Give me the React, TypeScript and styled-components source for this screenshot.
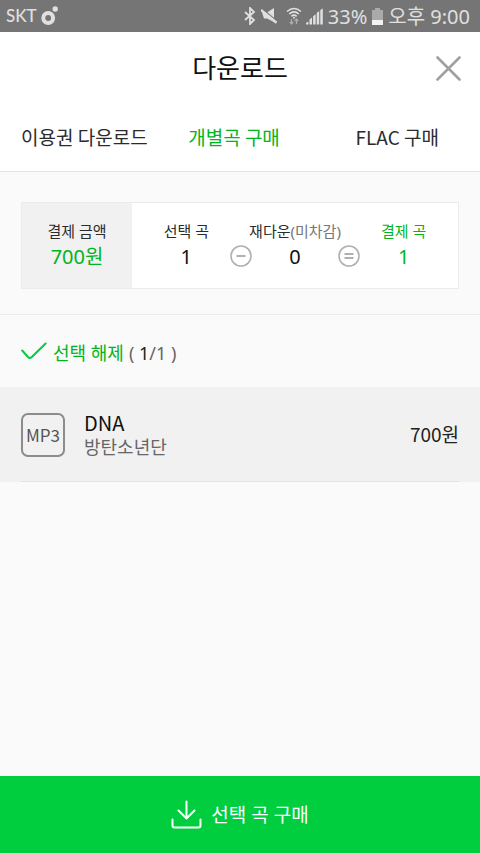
import React, { useState } from 'react';
import styled, { createGlobalStyle } from 'styled-components';

const mixedFont = "'Noto Sans', 'Noto Sans CJK KR', sans-serif";
const koreanFont = "'Noto Sans CJK KR', 'Noto Sans', sans-serif";

const GlobalStyle = createGlobalStyle`
  * { box-sizing: border-box; }
  body {
    margin: 0;
    background: #fafafa;
    color: #222;
    font-family: ${mixedFont};
  }
  button { font: inherit; color: inherit; background: none; border: 0; padding: 0; cursor: pointer; }
  h1, p, dl, dt, dd, ul { margin: 0; padding: 0; }
  ul { list-style: none; }
  svg { display: block; flex: none; }
`;

const Page = styled.div`
  min-height: 100vh;
  display: flex;
  flex-direction: column;
`;

const StatusBar = styled.div`
  display: flex;
  align-items: center;
  justify-content: space-between;
  height: 32px;
  padding: 0 10px 0 6px;
  background: #757575;
  color: #e0e0e0;
`;

const StatusGroup = styled.div<{ $gap: number }>`
  display: flex;
  align-items: center;
  gap: ${({ $gap }) => $gap}px;
  line-height: 32px;
`;

const Carrier = styled.span`
  font-family: Lato, sans-serif;
  font-size: 17px;
  font-weight: 500;
`;

const StatusText = styled.span`
  padding-top: 2px;
  font-size: 20px;
`;

const Header = styled.header`
  background: #fff;
  border-bottom: 1px solid #e4e4e4;
`;

const TitleRow = styled.div`
  display: grid;
  grid-template-columns: 1fr auto 1fr;
  align-items: center;
  height: 72px;
  padding: 0 19px;
`;

const Title = styled.h1`
  grid-column: 2;
  font-size: 26px;
  font-weight: 400;
  line-height: 40px;
  color: #111;
`;

const CloseButton = styled.button`
  justify-self: end;
`;

const Tabs = styled.div`
  display: grid;
  grid-template-columns: 40% 1fr auto;
  justify-items: start;
  align-items: start;
  height: 67px;
  padding: 0 41px 0 21px;
`;

const Tab = styled.button<{ $active: boolean }>`
  font-family: ${koreanFont};
  font-size: 19px;
  line-height: 65px;
  color: ${({ $active }) => ($active ? '#00b520' : '#2b2b2b')};
`;

const Summary = styled.section`
  padding: 30px 21px 25px;
  border-bottom: 1px solid #ececec;
`;

const SummaryCard = styled.dl`
  display: flex;
  height: 87px;
  border: 1px solid #ebebeb;
  background: #fff;
`;

const Amount = styled.div`
  width: 110px;
  padding-top: 15px;
  background: #f1f1f1;
  text-align: center;
`;

const Formula = styled.div`
  display: flex;
  flex: 1;
  padding-top: 15px;
`;

const Figure = styled.div`
  flex: 1 1 0;
  text-align: center;
  white-space: nowrap;
`;

const Label = styled.dt<{ $green?: boolean }>`
  font-size: 15px;
  line-height: 26px;
  color: ${({ $green }) => ($green ? '#00b520' : '#2b2b2b')};
`;

const Note = styled.span`
  color: #777;
`;

const Value = styled.dd<{ $green?: boolean }>`
  font-size: 20px;
  line-height: 26px;
  color: ${({ $green }) => ($green ? '#00b520' : '#111')};
`;

const Operator = styled.div`
  width: 22px;
  margin: 27px -11px 0;
`;

const SelectButton = styled.button`
  display: flex;
  align-items: center;
  height: 72px;
  padding: 0 21px;
  font-size: 18px;
  line-height: 28px;
  color: #666;
`;

const SelectLabel = styled.span`
  margin: 0 5px 0 6px;
  padding-top: 4px;
  color: #00b520;
`;

const SelectCount = styled.span`
  padding-top: 4px;
`;

const Checked = styled.span`
  color: #222;
`;

const Song = styled.li`
  padding: 0 21px;
  background: #f1f1f1;
`;

const SongRow = styled.div`
  display: flex;
  align-items: center;
  height: 95px;
  padding-top: 2px;
  border-bottom: 1px solid #e4e4e4;
`;

const Format = styled.span`
  width: 44px;
  height: 44px;
  border: 2px solid #8c8c8c;
  border-radius: 7px;
  font-family: ${koreanFont};
  font-size: 17px;
  line-height: 40px;
  text-align: center;
  color: #555;
`;

const SongInfo = styled.div`
  flex: 1;
  margin-left: 19px;
  line-height: 24px;
`;

const SongTitle = styled.p`
  font-family: ${koreanFont};
  font-size: 20px;
  color: #111;
`;

const Artist = styled.p`
  font-size: 18px;
  color: #666;
`;

const Price = styled.span`
  padding-bottom: 3px;
  font-family: ${koreanFont};
  font-size: 19px;
  color: #222;
`;

const BuyButton = styled.button`
  display: flex;
  align-items: center;
  justify-content: center;
  gap: 9px;
  height: 77px;
  margin-top: auto;
  background: #00ce3e;
  color: #fff;
  font-size: 19px;
`;

const BuyLabel = styled.span`
  padding-bottom: 2px;
`;

const CarrierIcon = () => (
  <svg width="18" height="20" viewBox="0 0 18 20">
    <circle cx="7.2" cy="12" r="4.9" fill="none" stroke="#e0e0e0" strokeWidth="4" />
    <circle cx="14.2" cy="3" r="2.7" fill="#e0e0e0" />
  </svg>
);

const BluetoothIcon = () => (
  <svg width="12" height="18" viewBox="0 0 12 18" fill="none" stroke="#e0e0e0" strokeWidth="1.8">
    <path d="M1 5l9 8-4 4V1l4 4-9 8" />
  </svg>
);

const MuteIcon = () => (
  <svg width="17" height="18" viewBox="0 0 17 18" fill="#e0e0e0">
    <path d="M1 5.5h5L13 1v14L6 11.5H3z" />
    <path d="M1.2 1.8l15 12.4" stroke="#757575" strokeWidth="1.2" />
    <path d="M0 3l15.5 12.8" stroke="#e0e0e0" strokeWidth="2.4" />
  </svg>
);

const WifiIcon = () => (
  <svg width="16" height="18" viewBox="0 0 16 18" fill="none" stroke="#e0e0e0" strokeWidth="1.6">
    <path d="M1 4.5Q8-1.5 15 4.5M3.2 7Q8 2.8 12.8 7M5.4 9.3Q8 7 10.6 9.3" />
    <circle cx="8" cy="10.7" r="1" fill="#e0e0e0" stroke="none" />
    <path d="M5.5 12v4.5M3.8 15l1.7 2 1.7-2M10.5 17v-4.5M8.8 14l1.7-2 1.7 2" stroke="#adadad" strokeWidth="1.2" />
  </svg>
);

const SignalIcon = () => (
  <svg width="17" height="17" viewBox="0 0 17 17" fill="#e0e0e0">
    <path d="M0 16.5V15l2.4-1.5v3zM3.5 16.5v-5l2.5-2v7zM7.1 16.5V8.2l2.5-2v10.3zM10.7 16.5V5l2.5-2v13.5zM14.3 16.5V2l2.5-1.5v16z" />
  </svg>
);

const BatteryIcon = () => (
  <svg width="11" height="17" viewBox="0 0 11 17">
    <path d="M3 0h5v2h3v15H0V2h3z" fill="#aaa" />
    <path d="M0 12h11v5H0z" fill="#f2f2f2" />
  </svg>
);

const CloseIcon = () => (
  <svg width="25" height="25" viewBox="0 0 25 25" fill="none" stroke="#a0a0a0" strokeWidth="2.6" strokeLinecap="round">
    <path d="M1.5 1.5l22 22M23.5 1.5l-22 22" />
  </svg>
);

const OperatorIcon = ({ d }: { d: string }) => (
  <svg width="22" height="22" viewBox="0 0 22 22" fill="none" stroke="#b0b0b0" strokeWidth="1.6">
    <circle cx="11" cy="11" r="10" />
    <path d={d} strokeWidth="2" />
  </svg>
);

const CheckIcon = () => (
  <svg width="26" height="18" viewBox="0 0 26 18" fill="none" stroke="#00ce3e" strokeWidth="2" strokeLinecap="round">
    <path d="M1.2 8.5l5.8 6.5q1.8 1.8 3.8 0L24.6 1.5" />
  </svg>
);

const DownloadIcon = () => (
  <svg width="31" height="29" viewBox="0 0 31 29" fill="none" stroke="#fff" strokeWidth="2" strokeLinecap="round" strokeLinejoin="round">
    <path d="M15.5 1.5v17M7.5 10.5l8 8 8-8M1.5 19.5v6q0 2 2 2h24q2 0 2-2v-6" />
  </svg>
);

const TABS = ['이용권 다운로드', '개별곡 구매', 'FLAC 구매'];

export default function App() {
  const [active, setActive] = useState(1);

  return (
    <Page>
      <GlobalStyle />
      <StatusBar>
        <StatusGroup $gap={4}>
          <Carrier>SKT</Carrier>
          <CarrierIcon />
        </StatusGroup>
        <StatusGroup $gap={5}>
          <StatusGroup $gap={8}>
            <StatusGroup $gap={5}>
              <BluetoothIcon />
              <MuteIcon />
            </StatusGroup>
            <StatusGroup $gap={4}>
              <WifiIcon />
              <SignalIcon />
            </StatusGroup>
          </StatusGroup>
          <StatusText>33%</StatusText>
          <BatteryIcon />
          <StatusText>오후 9:00</StatusText>
        </StatusGroup>
      </StatusBar>
      <Header>
        <TitleRow>
          <Title>다운로드</Title>
          <CloseButton aria-label="닫기">
            <CloseIcon />
          </CloseButton>
        </TitleRow>
        <Tabs role="tablist">
          {TABS.map((name, i) => (
            <Tab key={name} role="tab" aria-selected={i === active} $active={i === active} onClick={() => setActive(i)}>
              {name}
            </Tab>
          ))}
        </Tabs>
      </Header>
      <Summary>
        <SummaryCard>
          <Amount>
            <Label>결제 금액</Label>
            <Value $green>700원</Value>
          </Amount>
          <Formula>
            <Figure>
              <Label>선택 곡</Label>
              <Value>1</Value>
            </Figure>
            <Operator>
              <OperatorIcon d="M6.5 11h9" />
            </Operator>
            <Figure>
              <Label>
                재다운<Note>(미차감)</Note>
              </Label>
              <Value>0</Value>
            </Figure>
            <Operator>
              <OperatorIcon d="M6.5 9h9M6.5 13h9" />
            </Operator>
            <Figure>
              <Label $green>결제 곡</Label>
              <Value $green>1</Value>
            </Figure>
          </Formula>
        </SummaryCard>
      </Summary>
      <SelectButton>
        <CheckIcon />
        <SelectLabel>선택 해제</SelectLabel>
        <SelectCount>
          ( <Checked>1</Checked>/1 )
        </SelectCount>
      </SelectButton>
      <ul>
        <Song>
          <SongRow>
            <Format>MP3</Format>
            <SongInfo>
              <SongTitle>DNA</SongTitle>
              <Artist>방탄소년단</Artist>
            </SongInfo>
            <Price>700원</Price>
          </SongRow>
        </Song>
      </ul>
      <BuyButton>
        <DownloadIcon />
        <BuyLabel>선택 곡 구매</BuyLabel>
      </BuyButton>
    </Page>
  );
}
